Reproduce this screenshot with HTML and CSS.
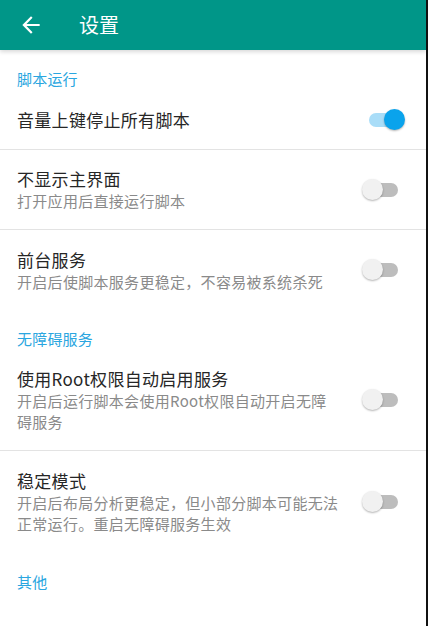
FILE: index.html
```html
<!DOCTYPE html>
<html lang="zh">
<head>
<meta charset="utf-8">
<link rel="stylesheet" href="styles.css">
</head>
<body>
<div class="screen">
  <header class="toolbar">
    <svg class="back" viewBox="0 0 24 24" width="26" height="26"><path fill="#fff" d="M20 11H7.83l5.59-5.59L12 4l-8 8 8 8 1.41-1.41L7.83 13H20v-2z"/></svg>
    <span class="title">设置</span>
  </header>
  <main class="list">
    <div class="category">脚本运行</div>
    <div class="pref divided">
      <div class="text"><div class="pref-title">音量上键停止所有脚本</div></div>
      <div class="switch on"><span class="track"></span><span class="thumb"></span></div>
    </div>
    <div class="pref divided">
      <div class="text"><div class="pref-title">不显示主界面</div><div class="pref-sub">打开应用后直接运行脚本</div></div>
      <div class="switch"><span class="track"></span><span class="thumb"></span></div>
    </div>
    <div class="pref">
      <div class="text"><div class="pref-title">前台服务</div><div class="pref-sub">开启后使脚本服务更稳定，不容易被系统杀死</div></div>
      <div class="switch"><span class="track"></span><span class="thumb"></span></div>
    </div>
    <div class="category">无障碍服务</div>
    <div class="pref divided">
      <div class="text"><div class="pref-title">使用Root权限自动启用服务</div><div class="pref-sub">开启后运行脚本会使用Root权限自动开启无障碍服务</div></div>
      <div class="switch"><span class="track"></span><span class="thumb"></span></div>
    </div>
    <div class="pref">
      <div class="text"><div class="pref-title">稳定模式</div><div class="pref-sub">开启后布局分析更稳定，但小部分脚本可能无法正常运行。重启无障碍服务生效</div></div>
      <div class="switch"><span class="track"></span><span class="thumb"></span></div>
    </div>
    <div class="category last">其他</div>
  </main>
</div>
</body>
</html>
```

FILE: styles.css
```css
* { box-sizing: border-box; }
html, body { margin: 0; padding: 0; background: #fff; }
body { font-family: "Noto Sans CJK SC", "Noto Sans", Roboto, sans-serif; }
.screen {
  width: 428px;
  height: 626px;
  overflow: hidden;
  border-right: 2px solid #111;
  background: #fff;
}
.toolbar {
  height: 50px;
  background: #009688;
  display: flex;
  align-items: center;
  padding-left: 18px;
  box-shadow: 0 2px 4px rgba(0,0,0,0.15);
  position: relative;
}
.back { display: block; }
.title {
  color: #fff;
  font-size: 20px;
  margin-left: 35px;
  line-height: 24px;
}
.list { display: flex; flex-direction: column; }
.category {
  color: #2aa6e0;
  font-size: 15px;
  letter-spacing: 0.2px;
  line-height: 18px;
  padding: 20px 17px 2px;
  height: 40px;
}
.category.last { padding-top: 21px; }
.pref {
  display: flex;
  align-items: center;
  padding: 18.5px 21px 18px 17px;
}
.divided { border-bottom: 1px solid #e3e3e3; }
.text { flex: 1; min-width: 0; padding-right: 22px; }
.pref-title {
  color: #262626;
  font-size: 17px;
  letter-spacing: 0.3px;
  line-height: 22px;
}
.pref-sub {
  color: #8a8a8a;
  font-size: 15px;
  letter-spacing: 0.3px;
  line-height: 21px;
}
.switch {
  position: relative;
  width: 43px;
  height: 22px;
  flex: none;
}
.track {
  position: absolute;
  left: 7px;
  top: 4px;
  width: 29px;
  height: 14px;
  border-radius: 7px;
  background: #bdbdbd;
}
.thumb {
  position: absolute;
  left: 0;
  top: 0;
  width: 21px;
  height: 21px;
  border-radius: 50%;
  background: #f1f1f1;
  box-shadow: 0 1px 2px rgba(0,0,0,0.3);
}
.switch.on .track { background: #a9ddf8; }
.switch.on .thumb { left: 22px; background: #0aa3ec; }
```
